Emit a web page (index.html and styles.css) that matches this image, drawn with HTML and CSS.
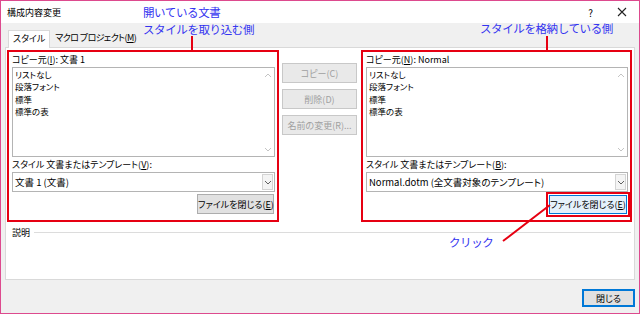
FILE: index.html
```html
<!DOCTYPE html>
<html>
<head>
  <meta charset="utf-8">
  <link rel="stylesheet" href="styles.css">
</head>
<body>
  <div class="window">
    <div class="titlebar">
      <span class="title">構成内容変更</span>
      <span class="help">?</span>
      <svg class="close-x" width="10" height="10" viewBox="0 0 10 10"><path d="M1 1L9 9M9 1L1 9" stroke="#222" stroke-width="1.1" fill="none"/></svg>
    </div>
    <div class="client">
      <div class="tabs">
        <div class="tab active">スタイル</div>
        <div class="tab">マクロ プロジェクト(<u>M</u>)</div>
      </div>
      <div class="panel">
        <div class="columns">
          <div class="side marked left">
            <div class="label">コピー元(<u>I</u>): 文書 1</div>
            <div class="listbox">
              <div class="items">
                <div>リストなし</div>
                <div>段落フォント</div>
                <div>標準</div>
                <div>標準の表</div>
              </div>
              <div class="scroll">
                <svg width="8" height="5" viewBox="0 0 8 5"><path d="M1 4L4 1L7 4" stroke="#c4c4c4" fill="none"/></svg>
                <svg width="8" height="5" viewBox="0 0 8 5"><path d="M1 1L4 4L7 1" stroke="#c4c4c4" fill="none"/></svg>
              </div>
            </div>
            <div class="label">スタイル 文書またはテンプレート(<u>V</u>):</div>
            <div class="combo">
              <span class="value">文書 1 (文書)</span>
              <span class="drop"><svg width="8" height="5" viewBox="0 0 8 5"><path d="M1 1L4 4L7 1" stroke="#606060" fill="none"/></svg></span>
            </div>
            <div class="actions">
              <button class="btn file-btn">ファイルを閉じる(<u>E</u>)</button>
            </div>
          </div>
          <div class="middle">
            <button class="btn disabled">コピー(C)</button>
            <button class="btn disabled">削除(D)</button>
            <button class="btn disabled">名前の変更(R)...</button>
          </div>
          <div class="side marked right">
            <div class="label">コピー元(<u>N</u>): Normal</div>
            <div class="listbox">
              <div class="items">
                <div>リストなし</div>
                <div>段落フォント</div>
                <div>標準</div>
                <div>標準の表</div>
              </div>
              <div class="scroll">
                <svg width="8" height="5" viewBox="0 0 8 5"><path d="M1 4L4 1L7 4" stroke="#c4c4c4" fill="none"/></svg>
                <svg width="8" height="5" viewBox="0 0 8 5"><path d="M1 1L4 4L7 1" stroke="#c4c4c4" fill="none"/></svg>
              </div>
            </div>
            <div class="label">スタイル 文書またはテンプレート(<u>B</u>):</div>
            <div class="combo">
              <span class="value">Normal.dotm (全文書対象のテンプレート)</span>
              <span class="drop"><svg width="8" height="5" viewBox="0 0 8 5"><path d="M1 1L4 4L7 1" stroke="#606060" fill="none"/></svg></span>
            </div>
            <div class="actions">
              <div class="highlight">
                <button class="btn file-btn focused">ファイルを閉じる(<u>E</u>)</button>
              </div>
            </div>
          </div>
        </div>
        <div class="desc">
          <span>説明</span>
          <span class="rule"></span>
        </div>
      </div>
      <div class="footer">
        <button class="btn default">閉じる</button>
      </div>
    </div>

    <div class="note note-left">開いている文書<br>スタイルを取り込む側</div>
    <div class="note note-right">スタイルを格納している側</div>
    <div class="note note-click">クリック</div>
    <svg class="marks" width="640" height="314" viewBox="0 0 640 314">
      <path d="M192 36V50M547 36V50M503 241L550 205" stroke="#e60012" stroke-width="2" fill="none"/>
    </svg>
  </div>
</body>
</html>
```

FILE: styles.css
```css
* {
  box-sizing: border-box;
}
body {
  margin: 0;
  font-family: "Noto Sans CJK JP", "Noto Sans", sans-serif;
  font-size: 9px;
  color: #000;
  font-feature-settings: "palt";
}
u {
  text-underline-offset: 1px;
}

.window {
  position: relative;
  width: 640px;
  height: 314px;
  border: 1px solid #dd4a8e;
  background: #f0f0f0;
  display: flex;
  flex-direction: column;
}

.titlebar {
  height: 22px;
  background: #fff;
  display: flex;
  align-items: center;
  padding-left: 6px;
}
.title {
  flex: 1;
}
.help {
  font-size: 10px;
  margin-right: 24px;
}
.close-x {
  margin-right: 12px;
}

.client {
  flex: 1;
  display: flex;
  flex-direction: column;
  padding: 0 4px;
}

.tabs {
  height: 24px;
  display: flex;
  align-items: flex-end;
  padding-left: 3px;
}
.tab {
  height: 17px;
  line-height: 16px;
  padding: 0 5px;
  letter-spacing: -0.6px;
  white-space: nowrap;
}
.tab.active {
  height: 18px;
  margin-bottom: -1px;
  background: #fff;
  border: 1px solid #d9d9d9;
  border-bottom: none;
  padding: 0 4px;
  letter-spacing: 0;
  position: relative;
}

.panel {
  height: 233px;
  background: #fff;
  border: 1px solid #d9d9d9;
}

.columns {
  display: flex;
  padding: 2px 1px 0;
}

.side {
  display: flex;
  flex-direction: column;
  padding: 0 2px 3px 3px;
}
.side.marked {
  border: 2px solid #e60012;
}
.side.left {
  width: 272px;
}
.side.right {
  width: 271px;
}

.label {
  height: 15px;
  line-height: 15px;
  white-space: nowrap;
}

.listbox {
  height: 90px;
  border: 1px solid #b4b4b4;
  display: flex;
}
.items {
  flex: 1;
  padding: 0 2px;
  font-size: 8.5px;
  line-height: 12.4px;
}
.scroll {
  width: 12px;
  display: flex;
  flex-direction: column;
  justify-content: space-between;
  align-items: center;
  padding: 5px 0 4px;
}

.combo {
  height: 20px;
  border: 1px solid #b4b4b4;
  display: flex;
  align-items: stretch;
}
.combo .value {
  flex: 1;
  padding-left: 2px;
  line-height: 18px;
  font-size: 9.5px;
  white-space: nowrap;
}
.drop {
  width: 11px;
  margin: 1px;
  border: 1px solid #d4d4d4;
  background: #f4f4f4;
  display: flex;
  align-items: center;
  justify-content: center;
}

.actions {
  display: flex;
  justify-content: flex-end;
  margin-top: 2px;
}

.btn {
  font: inherit;
  font-feature-settings: "palt";
  height: 20px;
  padding: 0;
  border: 1px solid #adadad;
  background: #e1e1e1;
  color: #000;
  white-space: nowrap;
}
.file-btn {
  width: 77px;
  margin-right: 1px;
}
.highlight {
  border: 2px solid #e60012;
  padding: 1px;
  margin: -2px -2px 0 0;
}
.btn.focused {
  height: 19px;
  width: 78px;
  margin: 0;
  background: #e5f1fb;
  border-color: #0078d7;
}

.middle {
  width: 75px;
  margin: 0 4px 0 3px;
  padding-top: 13px;
  display: flex;
  flex-direction: column;
  gap: 6px;
}
.btn.disabled {
  color: #a0a0a0;
  background: #e9e9e9;
  border-color: #c8c8c8;
}

.desc {
  display: flex;
  align-items: center;
  height: 18px;
  padding: 2px 3px 0 6px;
}
.desc .rule {
  flex: 1;
  height: 1px;
  margin-left: 4px;
  background: #dcdcdc;
}

.footer {
  display: flex;
  justify-content: flex-end;
  padding-top: 9px;
}
.btn.default {
  width: 53px;
  height: 18px;
  border-color: #0078d7;
  box-shadow: inset 0 0 0 1px #0078d7;
}

.note {
  position: absolute;
  color: #3434f0;
  font-size: 11.5px;
  line-height: 16.7px;
  letter-spacing: -0.4px;
  white-space: nowrap;
  font-feature-settings: normal;
}
.note-left {
  left: 142px;
  top: 3px;
}
.note-right {
  left: 479px;
  top: 19px;
}
.note-click {
  left: 448px;
  top: 233px;
}
.marks {
  position: absolute;
  left: -1px;
  top: -1px;
  pointer-events: none;
}
```
